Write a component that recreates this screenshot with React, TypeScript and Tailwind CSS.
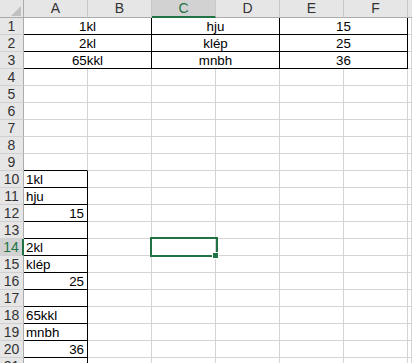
const COLS = ["A", "B", "C", "D", "E", "F"];

type CellProps = {
  span?: boolean;
  text?: string;
  align?: "left" | "center" | "right";
  blackR?: boolean;
  blackB?: boolean;
};

function Cell({ span, text, align = "left", blackR, blackB }: CellProps) {
  return (
    <div
      className={
        "h-[17px] box-border border-r border-b pt-px leading-[15px] overflow-hidden whitespace-nowrap text-black " +
        (span ? "col-span-2 " : "") +
        (blackR ? "border-r-black " : "border-r-[#d4d4d4] ") +
        (blackB ? "border-b-black " : "border-b-[#d4d4d4] ") +
        (align === "center" ? "text-center" : align === "right" ? "text-right pr-[3px]" : "text-left pl-[2px]")
      }
    >
      {text}
    </div>
  );
}

const top = [
  ["1kl", "hju", "15"],
  ["2kl", "klép", "25"],
  ["65kkl", "mnbh", "36"],
];

// column A list, rows 10..20
const list: Record<number, [string, "left" | "right"]> = {
  10: ["1kl", "left"],
  11: ["hju", "left"],
  12: ["15", "right"],
  14: ["2kl", "left"],
  15: ["klép", "left"],
  16: ["25", "right"],
  18: ["65kkl", "left"],
  19: ["mnbh", "left"],
  20: ["36", "right"],
};

function RowHeader({ n }: { n: number }) {
  const active = n === 14;
  return (
    <div
      className={
        "h-[17px] box-border border-b border-b-[#d0d0d0] text-center text-[14px] leading-[16px] " +
        (active
          ? "bg-[#d2d2d2] text-[#217346] border-r-2 border-r-[#217346]"
          : "bg-[#e6e6e6] text-[#333] border-r border-r-[#ababab]")
      }
    >
      {n}
    </div>
  );
}

export default function App() {
  const rows = Array.from({ length: 21 }, (_, i) => i + 1);
  return (
    <div className="relative w-[412px] h-[363px] overflow-hidden bg-white font-['Liberation_Sans',Arial,sans-serif] text-[13.33px]">
      <div className="grid grid-cols-[24px_repeat(6,64px)_4px]">
        {/* header */}
        <div className="relative h-[18px] box-border bg-[#e6e6e6] border-r border-b border-r-[#ababab] border-b-[#ababab]">
          <svg className="absolute left-[11px] top-[6px]" width="10" height="10" viewBox="0 0 10 10">
            <polygon points="10,0 10,10 0,10" fill="#c0c0c0" />
          </svg>
        </div>
        {COLS.map((c) => (
          <div
            key={c}
            className={
              "h-[18px] box-border border-r border-r-[#c8c8c8] text-center text-[14px] leading-[16px] " +
              (c === "C"
                ? "bg-[#d2d2d2] text-[#217346] border-b-2 border-b-[#217346]"
                : "bg-[#e6e6e6] text-[#333] border-b border-b-[#ababab]")
            }
          >
            {c}
          </div>
        ))}
        <div className="h-[18px] box-border bg-[#e6e6e6] border-b border-b-[#ababab]" />

        {rows.map((r) => {
          if (r <= 3) {
            const [a, c, e] = top[r - 1];
            return [
              <RowHeader key={"h" + r} n={r} />,
              <Cell key={"a" + r} span text={a} align="center" blackR blackB />,
              <Cell key={"c" + r} span text={c} align="center" blackR blackB />,
              <Cell key={"e" + r} span text={e} align="center" blackR blackB />,
              <Cell key={"g" + r} />,
            ];
          }
          const inList = r >= 10;
          const item = list[r];
          return [
            <RowHeader key={"h" + r} n={r} />,
            <Cell
              key={"a" + r}
              text={item?.[0]}
              align={item?.[1]}
              blackR={inList}
              blackB={r >= 9}
            />,
            ...["B", "C", "D", "E", "F", "G"].map((c) => <Cell key={c + r} />),
          ];
        })}
      </div>

      {/* active cell C14 */}
      <div className="absolute left-[150px] top-[237px] w-[68px] h-[20px] border-2 border-[#217346]" />
      <div className="absolute left-[212px] top-[252px] w-[7px] h-[7px] bg-[#217346] border border-white" />
    </div>
  );
}
